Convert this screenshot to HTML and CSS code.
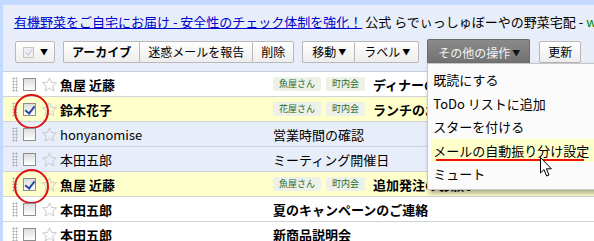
FILE: index.html
```html
<!DOCTYPE html>
<html lang="ja">
<head>
    <meta charset="UTF-8">
    <title>受信トレイ</title>
    <link rel="stylesheet" href="styles.css">
</head>
<body>
    <div class="frame">
        <div class="ad">
            <a href="#">有機野菜をご自宅にお届け - 安全性のチェック体制を強化！</a> 公式 らでぃっしゅぼーやの野菜宅配 - <span class="url">www.radishbo-ya.co.jp</span>
        </div>
        <div class="toolbar">
            <button class="btn select-btn"><span class="mini-check"></span><span class="arrow">▼</span></button>
            <div class="group">
                <button class="btn bold">アーカイブ</button>
                <button class="btn">迷惑メールを報告</button>
                <button class="btn">削除</button>
            </div>
            <div class="group">
                <button class="btn drop">移動<span class="arrow">▼</span></button>
                <button class="btn drop">ラベル<span class="arrow">▼</span></button>
            </div>
            <div class="more">
                <button class="btn drop dark">その他の操作<span class="arrow">▼</span></button>
                <ul class="menu">
                    <li>既読にする</li>
                    <li>ToDo リストに追加</li>
                    <li>スターを付ける</li>
                    <li class="hover">メールの自動振り分け設定<span class="mark"></span>
                        <svg class="cursor" width="13" height="21" viewBox="0 0 13 21">
                            <path d="M0.5 0.5 L0.5 16 L4 12.6 L6.6 19 L9 18 L6.4 11.8 L11.4 11.8 Z" fill="#fff" stroke="#000" stroke-width="1" stroke-linejoin="round"/>
                        </svg>
                    </li>
                    <li>ミュート</li>
                </ul>
            </div>
            <button class="btn">更新</button>
        </div>
        <div class="list">
            <div class="row unread">
                <span class="grip"></span><span class="cb"></span><svg class="star" width="15" height="15" viewBox="0 0 15 15"><path d="M7.5 0.8 L9.5 5.4 L14.4 5.8 L10.7 9.1 L11.9 14 L7.5 11.4 L3.1 14 L4.3 9.1 L0.6 5.8 L5.5 5.4 Z"/></svg>
                <span class="name">魚屋 近藤</span>
                <span class="label">魚屋さん</span><span class="label">町内会</span>
                <span class="subject">ディナーのご予約</span>
            </div>
            <div class="row unread selected">
                <span class="grip"></span><span class="cb checked circled"></span><svg class="star" width="15" height="15" viewBox="0 0 15 15"><path d="M7.5 0.8 L9.5 5.4 L14.4 5.8 L10.7 9.1 L11.9 14 L7.5 11.4 L3.1 14 L4.3 9.1 L0.6 5.8 L5.5 5.4 Z"/></svg>
                <span class="name">鈴木花子</span>
                <span class="label">花屋さん</span><span class="label">町内会</span>
                <span class="subject">ランチのお誘い</span>
            </div>
            <div class="row read">
                <span class="grip"></span><span class="cb"></span><svg class="star" width="15" height="15" viewBox="0 0 15 15"><path d="M7.5 0.8 L9.5 5.4 L14.4 5.8 L10.7 9.1 L11.9 14 L7.5 11.4 L3.1 14 L4.3 9.1 L0.6 5.8 L5.5 5.4 Z"/></svg>
                <span class="name">honyanomise</span>
                <span class="subject">営業時間の確認</span>
            </div>
            <div class="row read">
                <span class="grip"></span><span class="cb"></span><svg class="star" width="15" height="15" viewBox="0 0 15 15"><path d="M7.5 0.8 L9.5 5.4 L14.4 5.8 L10.7 9.1 L11.9 14 L7.5 11.4 L3.1 14 L4.3 9.1 L0.6 5.8 L5.5 5.4 Z"/></svg>
                <span class="name">本田五郎</span>
                <span class="subject">ミーティング開催日</span>
            </div>
            <div class="row unread selected">
                <span class="grip"></span><span class="cb checked circled"></span><svg class="star" width="15" height="15" viewBox="0 0 15 15"><path d="M7.5 0.8 L9.5 5.4 L14.4 5.8 L10.7 9.1 L11.9 14 L7.5 11.4 L3.1 14 L4.3 9.1 L0.6 5.8 L5.5 5.4 Z"/></svg>
                <span class="name">魚屋 近藤</span>
                <span class="label">魚屋さん</span><span class="label">町内会</span>
                <span class="subject">追加発注のお願い</span>
            </div>
            <div class="row unread">
                <span class="grip"></span><span class="cb"></span><svg class="star" width="15" height="15" viewBox="0 0 15 15"><path d="M7.5 0.8 L9.5 5.4 L14.4 5.8 L10.7 9.1 L11.9 14 L7.5 11.4 L3.1 14 L4.3 9.1 L0.6 5.8 L5.5 5.4 Z"/></svg>
                <span class="name">本田五郎</span>
                <span class="subject">夏のキャンペーンのご連絡</span>
            </div>
            <div class="row unread">
                <span class="grip"></span><span class="cb"></span><svg class="star" width="15" height="15" viewBox="0 0 15 15"><path d="M7.5 0.8 L9.5 5.4 L14.4 5.8 L10.7 9.1 L11.9 14 L7.5 11.4 L3.1 14 L4.3 9.1 L0.6 5.8 L5.5 5.4 Z"/></svg>
                <span class="name">本田五郎</span>
                <span class="subject">新商品説明会</span>
            </div>
        </div>
    </div>
</body>
</html>
```

FILE: styles.css
```css
* {
    margin: 0;
    padding: 0;
    box-sizing: border-box;
}

body {
    font-family: "Noto Sans CJK JP", "Noto Sans", sans-serif;
    font-size: 13px;
    background: #c3d9ff;
    color: #000;
    padding: 5px 0 0 3px;
    overflow: hidden;
    height: 241px;
}

.frame {
    background: #e8eef9;
}

/* sponsored line */
.ad {
    padding-top: 5px;
    padding-left: 11px;
    height: 29px;
    line-height: 24px;
    white-space: nowrap;
    overflow: hidden;
}

.ad a {
    color: #0000cc;
    text-decoration: underline;
}

.ad .url {
    color: #008000;
}

/* toolbar */
.toolbar {
    display: flex;
    align-items: flex-start;
    padding: 7px 0 8px 12px;
    height: 37px;
}

.btn {
    font-family: inherit;
    font-size: 12px;
    height: 22px;
    line-height: 20px;
    padding: 0 8px;
    border: 1px solid #b9b9b9;
    border-radius: 2px;
    background: linear-gradient(#ffffff, #ededed);
    color: #000;
    white-space: nowrap;
    display: flex;
    align-items: center;
}

.bold {
    font-weight: bold;
}

.arrow {
    font-size: 8px;
    margin-left: 2px;
}

.select-btn {
    width: 40px;
    padding: 0 0 0 7px;
    margin-right: 8px;
}

.mini-check {
    width: 11px;
    height: 11px;
    border: 1px solid #c4c4c4;
    background: #efefef;
    margin-right: 4px;
    position: relative;
}

.mini-check::after {
    content: "";
    position: absolute;
    left: 3px;
    top: 0;
    width: 3px;
    height: 6px;
    border: solid #b8c4dc;
    border-width: 0 1px 1px 0;
    transform: rotate(40deg);
}

.group {
    display: flex;
    margin-right: 8px;
}

.group .btn {
    border-radius: 0;
    border-right-width: 0;
}

.group .btn:first-child {
    border-radius: 2px 0 0 2px;
}

.group .btn:last-child {
    border-right-width: 1px;
    border-radius: 0 2px 2px 0;
}

.drop {
    padding: 0 8px 0 9px;
}

.more {
    position: relative;
    margin-top: -2px;
    margin-right: 9px;
}

.dark {
    height: 24px;
    padding: 2px 9px 0 10px;
    border-color: #6a6a6a;
    border-bottom: none;
    border-radius: 2px 2px 0 0;
    background: linear-gradient(#8a8a8a, #727272);
    color: #f2f2f2;
}

.dark .arrow {
    color: #111;
}

/* dropdown menu */
.menu {
    list-style: none;
    position: absolute;
    top: 24px;
    left: 0;
    width: 180px;
    padding: 4px 0 3px 3px;
    background: #fbfbfb;
    border: 1px solid #c8c8c8;
    box-shadow: 2px 3px 5px rgba(0, 0, 0, 0.35);
    z-index: 5;
}

.menu li {
    height: 23.5px;
    line-height: 23.5px;
    padding-left: 2px;
    white-space: nowrap;
    position: relative;
}

.menu li.hover {
    background: #ffffcc;
}

.mark {
    position: absolute;
    left: 5px;
    bottom: 1px;
    width: 148px;
    height: 2px;
    background: #ee1111;
}

.cursor {
    position: absolute;
    left: 109px;
    top: 18px;
}

/* message list */
.list {
    border-top: 1px solid #c8cfdc;
}

.row {
    display: flex;
    align-items: center;
    height: 25px;
    padding-left: 9px;
    border-bottom: 1px solid #cfd3db;
    background: #fff;
    white-space: nowrap;
}

.row.read {
    background: #e8eef9;
}

.row.selected {
    background: #ffffcc;
}

.unread .name,
.unread .subject {
    font-weight: bold;
}

.grip {
    width: 6px;
    height: 15px;
    background: radial-gradient(circle, #b4b4b4 0.9px, transparent 1.2px) 0 0 / 3px 3px;
}

.cb {
    width: 13px;
    height: 13px;
    margin-left: 5px;
    border: 1px solid #8e8e8e;
    background: linear-gradient(#dcdcdc, #ffffff);
    position: relative;
}

.cb.checked::before {
    content: "";
    position: absolute;
    left: 3px;
    top: 0;
    width: 4px;
    height: 8px;
    border: solid #2b47a8;
    border-width: 0 2px 2px 0;
    transform: rotate(38deg);
}

.cb.circled::after {
    content: "";
    position: absolute;
    left: -10px;
    top: -10px;
    width: 31px;
    height: 31px;
    border: 2px solid #e01010;
    border-radius: 50%;
}

.star {
    margin-left: 6px;
    fill: none;
    stroke: #c9c9c9;
    stroke-width: 1;
}

.name {
    width: 213px;
    margin-left: 3px;
}

.label {
    font-size: 9px;
    height: 14px;
    line-height: 14px;
    padding: 0 6px;
    margin-right: 5px;
    border-radius: 2px;
    background: #edf1e7;
    color: #1d6b35;
    font-weight: normal;
}

.label + .subject {
    margin-left: 3px;
}
```
